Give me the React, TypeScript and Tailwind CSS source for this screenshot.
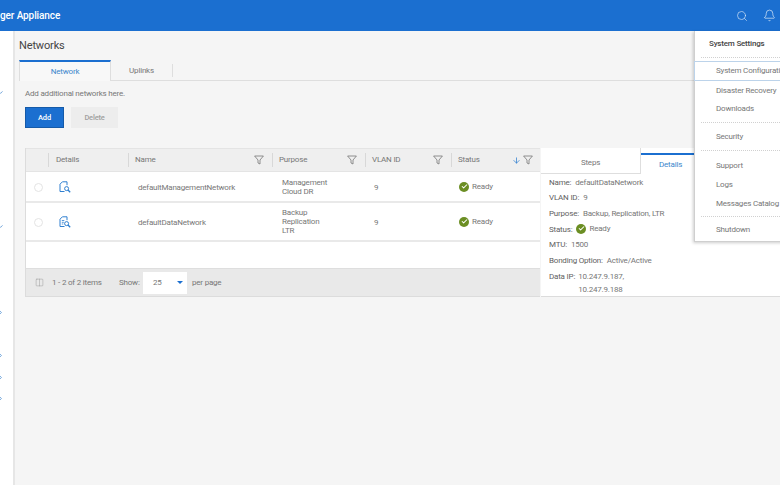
import React from "react";
import { Search, Bell, ChevronDown, ChevronRight, ArrowDown, Check, Columns2 } from "lucide-react";

const Funnel = () => (
  <svg width="10" height="10" viewBox="0 0 10 10" fill="none" stroke="#777" strokeWidth="0.8" className="shrink-0">
    <path d="M0.6 1h8.8L6 5v4L4 8V5z" />
  </svg>
);

const Ready = () => (
  <span className="inline-flex items-center gap-[3px]">
    <span className="w-[10px] h-[10px] rounded-full bg-[#6b8e23] flex items-center justify-center">
      <Check size={7} color="#fff" strokeWidth={3.5} />
    </span>
    <span>Ready</span>
  </span>
);

const DocIcon = ({ lines }: { lines?: boolean }) => (
  <svg width="12" height="12" viewBox="0 0 12 12" fill="none" stroke="#2f7fd0" strokeWidth="1" className="-mt-[2px]">
    <path d="M5.5 10.5H1V3.2L3.4 .8h4.6v3.4" />
    {lines && <path d="M2.8 4.5h2.5M2.8 6.3h2M2.8 8h1.5" strokeWidth="0.8" />}
    <circle cx="7.6" cy="7.6" r="2" />
    <path d="M9 9l2.2 2.2" strokeWidth="1.3" />
  </svg>
);

const Head = ({ label, filter, sort, cls = "pl-[7px] pr-[8px]" }: { label: string; filter?: boolean; sort?: boolean; cls?: string }) => (
  <div className={`flex items-center h-full relative ${cls}`}>
    <div className="absolute left-0 top-[4px] bottom-[4px] w-px bg-[#d8d8d8]" />
    <span className="flex-1">{label}</span>
    {sort && <ArrowDown size={9} color="#2f7fd0" className="mr-[2px]" />}
    {filter && <Funnel />}
  </div>
);

const Row = ({ h, name, purpose, Icon }: { h: string; name: string; purpose: string[]; Icon: React.ReactNode }) => (
  <div className={`grid grid-cols-[22px_80px_144px_93px_86px_89px] items-center bg-white border-b-2 border-[#e9e9e9] pt-[2px] ${h}`}>
    <div className="flex justify-center"><span className="ml-[2px] w-[9px] h-[9px] rounded-full border border-[#e4e4e4] bg-white" /></div>
    <div className="pl-[11px] flex">{Icon}</div>
    <div className="pl-[10px]">{name}</div>
    <div className="pl-[10px] leading-[8.7px]">{purpose.map((p) => <div key={p}>{p}</div>)}</div>
    <div className="pl-[9px]">9</div>
    <div className="pl-[8px]"><Ready /></div>
  </div>
);

const Info = ({ k, v }: { k: string; v: React.ReactNode }) => (
  <div className="flex items-center gap-[4px] h-[15.6px]"><span className="text-[#5f5f5f]">{k}</span><span>{v}</span></div>
);

const MenuItem = ({ t, h = "h-[19px]" }: { t: string; h?: string }) => (
  <div className={`pl-[21px] flex items-center whitespace-nowrap ${h}`}>{t}</div>
);

const Dash = () => <div className="mx-[6px] border-t border-dotted border-[#d0d0d0]" />;

export default function App() {
  return (
    <div className="w-[780px] h-[485px] overflow-hidden relative flex flex-col bg-[#f5f5f5] text-[8px] tracking-[-0.2px] text-[#777] font-['Roboto',sans-serif]">
      <header className="h-[31px] shrink-0 bg-[#1b6fd0] flex items-center text-white">
        <span className="text-[10px] tracking-[-0.1px] font-medium">ger Appliance</span>
        <div className="ml-auto flex items-center gap-[15px] mr-[4px]">
          <Search size={12} strokeWidth={1.3} color="#dce9f8" />
          <Bell size={13} strokeWidth={1.3} color="#dce9f8" />
        </div>
      </header>

      <div className="flex-1 flex min-h-0">
        <aside className="w-[15px] shrink-0 bg-white border-r-2 border-[#e6e6e6] flex flex-col text-[#3f86cf]">
          <ChevronDown size={7} strokeWidth={2.5} className="mt-[58px] -ml-[3px]" />
          <ChevronDown size={7} strokeWidth={2.5} className="mt-[127px] -ml-[3px]" />
          <ChevronRight size={7} strokeWidth={2.5} className="mt-[79px] -ml-[3px]" />
          <ChevronRight size={7} strokeWidth={2.5} className="mt-[36px] -ml-[3px]" />
          <ChevronRight size={7} strokeWidth={2.5} className="mt-[15px] -ml-[3px]" />
          <ChevronRight size={7} strokeWidth={2.5} className="mt-[14px] -ml-[3px]" />
        </aside>

        <main className="flex-1 min-w-0 flex flex-col">
          <h1 className="ml-[4px] mt-[8px] h-[13px] leading-[13px] text-[11px] tracking-[-0.15px] text-[#444]">Networks</h1>
          <div className="mt-[8px] h-[21px] ml-[4px] flex border-b border-[#dedede]">
            <div className="w-[92px] h-[21px] bg-[#f8f8f8] border-t-2 border-x border-t-[#1b6fd0] border-x-[#dedede] flex items-center justify-center text-[#3d87cc]">Network</div>
            <div className="w-[62px] h-[13px] mt-[4px] border-r border-[#dedede] flex items-center justify-center">Uplinks</div>
          </div>
          <p className="ml-[10px] mt-[8px] h-[10px] leading-[10px]">Add additional networks here.</p>
          <div className="ml-[10px] mt-[8px] flex gap-[7px] font-medium">
            <button className="w-[39px] h-[21px] bg-[#1b6fd0] border border-[#155aa8] text-white text-[7.5px]">Add</button>
            <button className="w-[47px] h-[21px] bg-[#ededed] text-[#a0a0a0] text-[7.5px]">Delete</button>
          </div>

          <section className="ml-[10px] mt-[20px] h-[149px] flex">
            <div className="w-[515px] shrink-0 flex flex-col border-l border-b border-[#dcdcdc]">
              <div className="h-[24px] grid grid-cols-[22px_80px_144px_93px_86px_89px] items-center bg-[#efefef] border-t border-b border-[#e4e4e4]">
                <div />
                <Head label="Details" cls="pl-[8px] pr-[8px]" />
                <Head label="Name" filter />
                <Head label="Purpose" filter />
                <Head label="VLAN ID" filter />
                <Head label="Status" filter sort cls="pl-[7px] pr-[7px]" />
              </div>
              <Row h="h-[31px]" name="defaultManagementNetwork" purpose={["Management", "Cloud DR"]} Icon={<DocIcon />} />
              <Row h="h-[39px]" name="defaultDataNetwork" purpose={["Backup", "Replication", "LTR"]} Icon={<DocIcon lines />} />
              <div className="flex-1 bg-white" />
              <div className="h-[28px] bg-[#e9e9e9] flex items-center border-t border-[#dedede]">
                <Columns2 size={9} strokeWidth={1.3} className="ml-[9px] text-[#999]" />
                <span className="ml-[8px] w-[50px]">1 - 2 of 2 items</span>
                <span className="ml-[17px] w-[20px]">Show:</span>
                <div className="ml-[4px] w-[44px] h-[22px] bg-white flex items-center pl-[10px]">
                  <span>25</span>
                  <span className="ml-auto mr-[4px] w-0 h-0 border-x-[3px] border-t-[3px] border-x-transparent border-t-[#1b6fd0]" />
                </div>
                <span className="ml-[5px]">per page</span>
              </div>
            </div>

            <aside className="flex-1 ml-px bg-white border-b border-[#dcdcdc] overflow-hidden flex flex-col">
              <div className="flex h-[26px] shrink-0">
                <div className="w-[100px] h-[26px] border-r border-b border-[#dedede] flex items-center justify-center pt-[5px]">Steps</div>
                <div className="flex-1 mt-[5px] border-t-2 border-[#1b6fd0] flex items-start pl-[18px] pt-[4px] text-[#3d87cc]">Details</div>
              </div>
              <div className="pl-[8px] pt-[1px]">
                <Info k="Name:" v="defaultDataNetwork" />
                <Info k="VLAN ID:" v="9" />
                <Info k="Purpose:" v="Backup, Replication, LTR" />
                <Info k="Status:" v={<Ready />} />
                <Info k="MTU:" v="1500" />
                <Info k="Bonding Option:" v="Active/Active" />
                <div className="flex gap-[3px] mt-[2px]">
                  <span className="text-[#5f5f5f]">Data IP:</span>
                  <span className="leading-[13px] -mt-[1px]">10.247.9.187,<br />10.247.9.188</span>
                </div>
              </div>
            </aside>
          </section>
        </main>
      </div>

      <div className="absolute left-[694px] top-[31px] w-[100px] h-[211px] bg-white border-l border-b border-[#cfcfcf] shadow-[-1px_1px_3px_rgba(0,0,0,0.2)]">
        <div className="h-[26px] pl-[14px] flex items-center text-[#444] font-medium">System Settings</div>
        <Dash />
        <div className="mt-[3px] h-[20px] pl-[21px] flex items-center whitespace-nowrap border-y border-l border-[#bcd3ea] -ml-px">System Configuration</div>
        <MenuItem t="Disaster Recovery" />
        <MenuItem t="Downloads" h="h-[18px]" />
        <div className="mt-[4px]"><Dash /></div>
        <MenuItem t="Security" h="h-[27px]" />
        <Dash />
        <div className="mt-[5px]"><MenuItem t="Support" /></div>
        <MenuItem t="Logs" />
        <MenuItem t="Messages Catalog" />
        <div className="mt-[3px]"><Dash /></div>
        <MenuItem t="Shutdown" h="h-[25px]" />
      </div>
    </div>
  );
}
